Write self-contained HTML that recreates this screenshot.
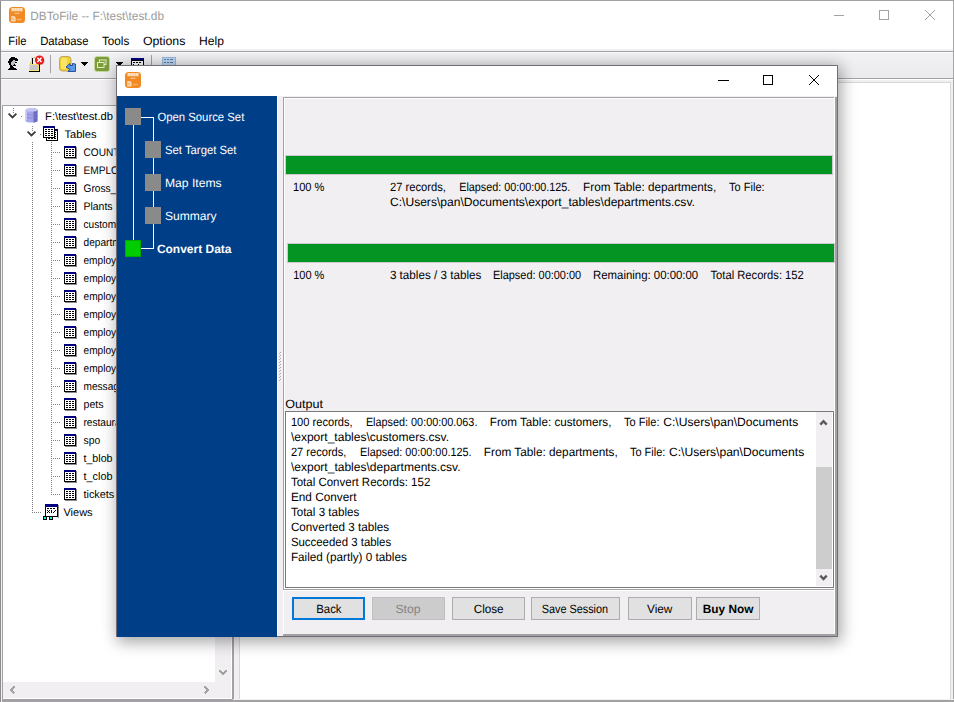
<!DOCTYPE html>
<html><head><meta charset="utf-8"><title>DBToFile</title>
<style>html,body{margin:0;padding:0;background:#fff;overflow:hidden;}svg{display:block;}
text{text-rendering:geometricPrecision;}</style></head>
<body><svg width="954" height="702" viewBox="0 0 954 702" shape-rendering="crispEdges">
<rect x="0" y="0" width="954" height="702" fill="#ffffff" />
<rect x="0" y="51" width="954" height="651" fill="#f1eff2" />
<g transform="translate(9,7)" shape-rendering="geometricPrecision"><rect x="0" y="0" width="16" height="16" rx="3.5" fill="#f28a24"/><rect x="2.5" y="1" width="11" height="3.2" fill="#fde3c4"/><path d="M5.3 1v3.2M8 1v3.2M10.7 1v3.2" stroke="#f6b574" stroke-width="0.6"/><rect x="5.5" y="5.8" width="5" height="1.2" fill="#f8bf86"/><path d="M2.2 9 h3 l1.5 1.5 v4 h-4.5 z" fill="#fad3a8"/><path d="M3 11 l2 2" stroke="#f2a060" stroke-width="0.8"/><rect x="8" y="11.8" width="4.5" height="1.4" fill="#f7b477"/></g>
<text x="30.30" y="20" font-family="&quot;Liberation Sans&quot;, sans-serif" font-size="12" font-weight="400" fill="#9b9b9b" textLength="133.70" lengthAdjust="spacingAndGlyphs" >DBToFile -- F:\test\test.db</text>
<rect x="834" y="15" width="10" height="1" fill="#a3a3a3" />
<rect x="879.5" y="10.5" width="9" height="9" fill="none" stroke="#a3a3a3" stroke-width="1"/>
<path d="M925 10 L935 20 M935 10 L925 20" stroke="#a3a3a3" stroke-width="1"/>
<text x="8.30" y="45" font-family="&quot;Liberation Sans&quot;, sans-serif" font-size="12" font-weight="400" fill="#000" textLength="18.10" lengthAdjust="spacingAndGlyphs" >File</text>
<text x="40.20" y="45" font-family="&quot;Liberation Sans&quot;, sans-serif" font-size="12" font-weight="400" fill="#000" textLength="48.30" lengthAdjust="spacingAndGlyphs" >Database</text>
<text x="101.90" y="45" font-family="&quot;Liberation Sans&quot;, sans-serif" font-size="12" font-weight="400" fill="#000" textLength="27.40" lengthAdjust="spacingAndGlyphs" >Tools</text>
<text x="142.90" y="45" font-family="&quot;Liberation Sans&quot;, sans-serif" font-size="12" font-weight="400" fill="#000" textLength="42.50" lengthAdjust="spacingAndGlyphs" >Options</text>
<text x="199.00" y="45" font-family="&quot;Liberation Sans&quot;, sans-serif" font-size="12" font-weight="400" fill="#000" textLength="24.90" lengthAdjust="spacingAndGlyphs" >Help</text>
<rect x="0" y="49" width="954" height="2" fill="#f1f0f3" />
<rect x="0" y="51" width="954" height="1" fill="#a3a1a6" />
<rect x="0" y="52" width="954" height="1" fill="#fcfcfc" />
<defs><linearGradient id="tbg" x1="0" y1="0" x2="0" y2="1"><stop offset="0" stop-color="#f2f1f4"/><stop offset="1" stop-color="#ebeaed"/></linearGradient></defs>
<rect x="0" y="53" width="954" height="25" fill="url(#tbg)" />
<rect x="0" y="78" width="954" height="1" fill="#a3a1a6" />
<rect x="0" y="79" width="954" height="1" fill="#ffffff" />
<rect x="11" y="57" width="1" height="1" fill="#000"/><rect x="12" y="57" width="1" height="1" fill="#000"/><rect x="13" y="57" width="1" height="1" fill="#000"/><rect x="14" y="57" width="1" height="1" fill="#000"/><rect x="10" y="58" width="1" height="1" fill="#000"/><rect x="11" y="58" width="1" height="1" fill="#000"/><rect x="12" y="58" width="1" height="1" fill="#000"/><rect x="13" y="58" width="1" height="1" fill="#000"/><rect x="14" y="58" width="1" height="1" fill="#000"/><rect x="15" y="58" width="1" height="1" fill="#000"/><rect x="16" y="58" width="1" height="1" fill="#000"/><rect x="9" y="59" width="1" height="1" fill="#000"/><rect x="10" y="59" width="1" height="1" fill="#000"/><rect x="11" y="59" width="1" height="1" fill="#000"/><rect x="12" y="59" width="1" height="1" fill="#000"/><rect x="13" y="59" width="1" height="1" fill="#000"/><rect x="14" y="59" width="1" height="1" fill="#000"/><rect x="15" y="59" width="1" height="1" fill="#000"/><rect x="16" y="59" width="1" height="1" fill="#000"/><rect x="17" y="59" width="1" height="1" fill="#000"/><rect x="9" y="60" width="1" height="1" fill="#000"/><rect x="10" y="60" width="1" height="1" fill="#000"/><rect x="11" y="60" width="1" height="1" fill="#000"/><rect x="12" y="60" width="1" height="1" fill="#000"/><rect x="13" y="60" width="1" height="1" fill="#c0c0c0"/><rect x="14" y="60" width="1" height="1" fill="#c0c0c0"/><rect x="15" y="60" width="1" height="1" fill="#000"/><rect x="16" y="60" width="1" height="1" fill="#000"/><rect x="17" y="60" width="1" height="1" fill="#000"/><rect x="8" y="61" width="1" height="1" fill="#000"/><rect x="9" y="61" width="1" height="1" fill="#000"/><rect x="10" y="61" width="1" height="1" fill="#000"/><rect x="11" y="61" width="1" height="1" fill="#000"/><rect x="12" y="61" width="1" height="1" fill="#c0c0c0"/><rect x="13" y="61" width="1" height="1" fill="#c0c0c0"/><rect x="14" y="61" width="1" height="1" fill="#c0c0c0"/><rect x="15" y="61" width="1" height="1" fill="#c0c0c0"/><rect x="8" y="62" width="1" height="1" fill="#000"/><rect x="9" y="62" width="1" height="1" fill="#000"/><rect x="10" y="62" width="1" height="1" fill="#000"/><rect x="11" y="62" width="1" height="1" fill="#c0c0c0"/><rect x="12" y="62" width="1" height="1" fill="#c0c0c0"/><rect x="13" y="62" width="1" height="1" fill="#c0c0c0"/><rect x="14" y="62" width="1" height="1" fill="#c0c0c0"/><rect x="15" y="62" width="1" height="1" fill="#000"/><rect x="16" y="62" width="1" height="1" fill="#000"/><rect x="9" y="63" width="1" height="1" fill="#000"/><rect x="10" y="63" width="1" height="1" fill="#000"/><rect x="11" y="63" width="1" height="1" fill="#c0c0c0"/><rect x="12" y="63" width="1" height="1" fill="#c0c0c0"/><rect x="13" y="63" width="1" height="1" fill="#c0c0c0"/><rect x="14" y="63" width="1" height="1" fill="#c0c0c0"/><rect x="9" y="64" width="1" height="1" fill="#000"/><rect x="10" y="64" width="1" height="1" fill="#000"/><rect x="11" y="64" width="1" height="1" fill="#c0c0c0"/><rect x="12" y="64" width="1" height="1" fill="#c0c0c0"/><rect x="13" y="64" width="1" height="1" fill="#c0c0c0"/><rect x="14" y="64" width="1" height="1" fill="#000"/><rect x="10" y="65" width="1" height="1" fill="#000"/><rect x="11" y="65" width="1" height="1" fill="#000"/><rect x="12" y="65" width="1" height="1" fill="#c0c0c0"/><rect x="13" y="65" width="1" height="1" fill="#000"/><rect x="14" y="65" width="1" height="1" fill="#000"/><rect x="15" y="65" width="1" height="1" fill="#000"/><rect x="10" y="66" width="1" height="1" fill="#000"/><rect x="11" y="66" width="1" height="1" fill="#000"/><rect x="12" y="66" width="1" height="1" fill="#000"/><rect x="10" y="67" width="1" height="1" fill="#000"/><rect x="11" y="67" width="1" height="1" fill="#000"/><rect x="12" y="67" width="1" height="1" fill="#000"/><rect x="13" y="67" width="1" height="1" fill="#000"/><rect x="9" y="68" width="1" height="1" fill="#000"/><rect x="10" y="68" width="1" height="1" fill="#000"/><rect x="11" y="68" width="1" height="1" fill="#000"/><rect x="12" y="68" width="1" height="1" fill="#000"/><rect x="13" y="68" width="1" height="1" fill="#000"/><rect x="14" y="68" width="1" height="1" fill="#000"/><rect x="15" y="68" width="1" height="1" fill="#000"/><rect x="8" y="69" width="1" height="1" fill="#000"/><rect x="9" y="69" width="1" height="1" fill="#000"/><rect x="10" y="69" width="1" height="1" fill="#000"/><rect x="11" y="69" width="1" height="1" fill="#000"/><rect x="12" y="69" width="1" height="1" fill="#000"/><rect x="13" y="69" width="1" height="1" fill="#000"/><rect x="14" y="69" width="1" height="1" fill="#000"/><rect x="15" y="69" width="1" height="1" fill="#000"/><rect x="16" y="69" width="1" height="1" fill="#000"/>
<g><rect x="29" y="64" width="11" height="8" fill="#000"/><rect x="29" y="64" width="10" height="7" fill="#f3e46c"/><rect x="30" y="65" width="8" height="5" fill="#c6c6cc"/><rect x="31" y="57" width="1" height="7" fill="#f3e46c"/><rect x="32" y="58" width="1" height="6" fill="#000"/><rect x="30" y="62" width="1" height="2" fill="#d8d070"/><rect x="33" y="57" width="2" height="1" fill="#c8d060"/></g>
<g shape-rendering="geometricPrecision"><circle cx="39.5" cy="60" r="4.6" fill="#e8161b"/><circle cx="40.5" cy="61" r="4" fill="#b01010" opacity="0.35"/><circle cx="39.3" cy="59.8" r="3.8" fill="#ee2222"/><path d="M37.3 57.8 L41.5 62 M41.5 57.8 L37.3 62" stroke="#fff" stroke-width="1.4"/></g>
<rect x="50" y="55" width="1" height="18" fill="#a3a1a6" />
<g shape-rendering="geometricPrecision"><rect x="59.5" y="56.5" width="11.5" height="14.5" rx="3" fill="#f3d22e" stroke="#b9a46a" stroke-width="1"/><rect x="61" y="58" width="6" height="11" rx="2" fill="#fae979" opacity="0.8"/><path d="M66 67 L70 63.5 L70 65.5 L72.5 65.5 L72.5 63.5 L75.5 64 L75.5 71.5 L68 71.5 L70 69.5 Z" fill="#5b9be8" stroke="#1d3f9a" stroke-width="0.9"/></g>
<path d="M81 62 H88 L84.5 66 Z" fill="#000"/>
<g shape-rendering="geometricPrecision"><rect x="94.5" y="56.5" width="15" height="15" rx="2.5" fill="#7c9c3a" stroke="#c9dca0" stroke-width="0.8"/><rect x="99.5" y="60" width="6.5" height="4.5" fill="none" stroke="#e0ecc4" stroke-width="1"/><rect x="97.5" y="62.5" width="6.5" height="5" fill="#7c9c3a" stroke="#e0ecc4" stroke-width="1"/></g>
<path d="M116 62 H123 L119.5 66 Z" fill="#000"/>
<g transform="translate(131,58)"><rect x="0" y="0" width="13" height="10" fill="#000"/><rect x="0" y="0" width="13" height="2" fill="#000080"/><rect x="1" y="3" width="11" height="7" fill="#fff"/><rect x="2" y="4" width="2" height="1" fill="#000"/><rect x="5" y="4" width="2" height="1" fill="#000"/><rect x="8" y="4" width="2" height="1" fill="#000"/><path d="M2 6 L5 9 M7 6 L10 9" stroke="#000" stroke-width="1"/></g>
<rect x="151" y="55" width="1" height="18" fill="#a3a1a6" />
<g transform="translate(162,57)"><rect x="0" y="0" width="13" height="10" fill="#bcd8f4" stroke="#9bb8d8" stroke-width="1"/><rect x="2" y="2" width="2" height="1" fill="#5b7fa8"/><rect x="5" y="2" width="2" height="1" fill="#5b7fa8"/><rect x="8" y="2" width="3" height="1" fill="#5b7fa8"/><rect x="2" y="5" width="2" height="1" fill="#5b7fa8"/><rect x="5" y="5" width="2" height="1" fill="#5b7fa8"/><rect x="8" y="5" width="3" height="1" fill="#5b7fa8"/></g>
<rect x="0" y="0" width="1" height="702" fill="#8c8c8c" />
<rect x="0" y="0" width="954" height="1" fill="#a3a1a6" />
<rect x="953" y="0" width="1" height="702" fill="#a8a8a8" />
<rect x="2" y="105" width="232" height="597" fill="#a3a1a6" />
<rect x="3" y="106" width="229" height="593" fill="#ffffff" />
<rect x="215" y="106" width="16" height="592" fill="#f1eff2" />
<rect x="3" y="682" width="228" height="16" fill="#f1eff2" />
<path d="M219.5 670.5 L223 674 L226.5 670.5" fill="none" stroke="#a3a3a3" stroke-width="2"/>
<path d="M204.5 686.5 L208 690 L204.5 693.5" fill="none" stroke="#a3a3a3" stroke-width="2"/>
<path d="M14.5 686.5 L11 690 L14.5 693.5" fill="none" stroke="#a3a3a3" stroke-width="2"/>
<path d="M8.6 113.6 L12.5 117.5 L16.4 113.6" fill="none" stroke="#3c3c3c" stroke-width="1.8" shape-rendering="geometricPrecision"/>
<rect x="13" y="108" width="1" height="1" fill="#808080" />
<rect x="13" y="110" width="1" height="1" fill="#808080" />
<rect x="13" y="112" width="1" height="1" fill="#808080" />
<rect x="21" y="116" width="1" height="1" fill="#808080" />
<g transform="translate(25,108)" shape-rendering="geometricPrecision"><path d="M0.5 2.2 Q0.5 0.2 6.5 0.2 Q12.5 0.2 12.5 2.2 V12.5 Q12.5 14.6 6.5 14.6 Q0.5 14.6 0.5 12.5 Z" fill="#a4a4ea"/><path d="M8.5 0.6 Q12.5 1 12.5 2.2 V12.5 Q12.5 14 8.5 14.5 Z" fill="#6a6abf"/><path d="M0.5 2.2 Q0.5 0.2 6.5 0.2 Q12.5 0.2 12.5 2.2 Q12.5 3.6 6.5 3.6 Q0.5 3.6 0.5 2.2 Z" fill="#c4c4f4"/><path d="M1.5 6.5 Q6 7.5 11.5 6.5 M1.5 9.5 Q6 10.5 11.5 9.5" fill="none" stroke="#8282d4" stroke-width="0.7"/><path d="M1.5 3 V12" stroke="#d0d0f8" stroke-width="0.8"/></g>
<text x="45.10" y="120" font-family="&quot;Liberation Sans&quot;, sans-serif" font-size="11" font-weight="400" fill="#000" textLength="67.90" lengthAdjust="spacingAndGlyphs" >F:\test\test.db</text>
<path d="M27.6 131.6 L31.5 135.5 L35.4 131.6" fill="none" stroke="#3c3c3c" stroke-width="1.8" shape-rendering="geometricPrecision"/>
<rect x="32" y="126" width="1" height="1" fill="#808080" />
<rect x="32" y="128" width="1" height="1" fill="#808080" />
<rect x="32" y="130" width="1" height="1" fill="#808080" />
<rect x="40" y="134" width="1" height="1" fill="#808080" />
<rect x="46" y="129" width="12" height="12" fill="#000" />
<rect x="46" y="129" width="12" height="2" fill="#000080" />
<rect x="47" y="131" width="10" height="9" fill="#fff" />
<rect x="48" y="132" width="2" height="1" fill="#000" />
<rect x="51" y="132" width="2" height="1" fill="#000" />
<rect x="54" y="132" width="2" height="1" fill="#000" />
<rect x="48" y="134" width="2" height="1" fill="#000" />
<rect x="51" y="134" width="2" height="1" fill="#000" />
<rect x="54" y="134" width="2" height="1" fill="#000" />
<rect x="48" y="136" width="2" height="1" fill="#000" />
<rect x="51" y="136" width="2" height="1" fill="#000" />
<rect x="54" y="136" width="2" height="1" fill="#000" />
<rect x="48" y="138" width="2" height="1" fill="#000" />
<rect x="51" y="138" width="2" height="1" fill="#000" />
<rect x="54" y="138" width="2" height="1" fill="#000" />
<rect x="43" y="126" width="12" height="12" fill="#000" />
<rect x="43" y="126" width="12" height="2" fill="#000080" />
<rect x="44" y="128" width="10" height="9" fill="#fff" />
<rect x="45" y="129" width="2" height="1" fill="#000" />
<rect x="48" y="129" width="2" height="1" fill="#000" />
<rect x="51" y="129" width="2" height="1" fill="#000" />
<rect x="45" y="131" width="2" height="1" fill="#000" />
<rect x="48" y="131" width="2" height="1" fill="#000" />
<rect x="51" y="131" width="2" height="1" fill="#000" />
<rect x="45" y="133" width="2" height="1" fill="#000" />
<rect x="48" y="133" width="2" height="1" fill="#000" />
<rect x="51" y="133" width="2" height="1" fill="#000" />
<rect x="45" y="135" width="2" height="1" fill="#000" />
<rect x="48" y="135" width="2" height="1" fill="#000" />
<rect x="51" y="135" width="2" height="1" fill="#000" />
<text x="64.50" y="138" font-family="&quot;Liberation Sans&quot;, sans-serif" font-size="11" font-weight="400" fill="#000" textLength="32.00" lengthAdjust="spacingAndGlyphs" >Tables</text>
<rect x="32" y="142" width="1" height="1" fill="#808080" />
<rect x="32" y="144" width="1" height="1" fill="#808080" />
<rect x="32" y="146" width="1" height="1" fill="#808080" />
<rect x="32" y="148" width="1" height="1" fill="#808080" />
<rect x="32" y="150" width="1" height="1" fill="#808080" />
<rect x="32" y="152" width="1" height="1" fill="#808080" />
<rect x="32" y="154" width="1" height="1" fill="#808080" />
<rect x="32" y="156" width="1" height="1" fill="#808080" />
<rect x="32" y="158" width="1" height="1" fill="#808080" />
<rect x="32" y="160" width="1" height="1" fill="#808080" />
<rect x="32" y="162" width="1" height="1" fill="#808080" />
<rect x="32" y="164" width="1" height="1" fill="#808080" />
<rect x="32" y="166" width="1" height="1" fill="#808080" />
<rect x="32" y="168" width="1" height="1" fill="#808080" />
<rect x="32" y="170" width="1" height="1" fill="#808080" />
<rect x="32" y="172" width="1" height="1" fill="#808080" />
<rect x="32" y="174" width="1" height="1" fill="#808080" />
<rect x="32" y="176" width="1" height="1" fill="#808080" />
<rect x="32" y="178" width="1" height="1" fill="#808080" />
<rect x="32" y="180" width="1" height="1" fill="#808080" />
<rect x="32" y="182" width="1" height="1" fill="#808080" />
<rect x="32" y="184" width="1" height="1" fill="#808080" />
<rect x="32" y="186" width="1" height="1" fill="#808080" />
<rect x="32" y="188" width="1" height="1" fill="#808080" />
<rect x="32" y="190" width="1" height="1" fill="#808080" />
<rect x="32" y="192" width="1" height="1" fill="#808080" />
<rect x="32" y="194" width="1" height="1" fill="#808080" />
<rect x="32" y="196" width="1" height="1" fill="#808080" />
<rect x="32" y="198" width="1" height="1" fill="#808080" />
<rect x="32" y="200" width="1" height="1" fill="#808080" />
<rect x="32" y="202" width="1" height="1" fill="#808080" />
<rect x="32" y="204" width="1" height="1" fill="#808080" />
<rect x="32" y="206" width="1" height="1" fill="#808080" />
<rect x="32" y="208" width="1" height="1" fill="#808080" />
<rect x="32" y="210" width="1" height="1" fill="#808080" />
<rect x="32" y="212" width="1" height="1" fill="#808080" />
<rect x="32" y="214" width="1" height="1" fill="#808080" />
<rect x="32" y="216" width="1" height="1" fill="#808080" />
<rect x="32" y="218" width="1" height="1" fill="#808080" />
<rect x="32" y="220" width="1" height="1" fill="#808080" />
<rect x="32" y="222" width="1" height="1" fill="#808080" />
<rect x="32" y="224" width="1" height="1" fill="#808080" />
<rect x="32" y="226" width="1" height="1" fill="#808080" />
<rect x="32" y="228" width="1" height="1" fill="#808080" />
<rect x="32" y="230" width="1" height="1" fill="#808080" />
<rect x="32" y="232" width="1" height="1" fill="#808080" />
<rect x="32" y="234" width="1" height="1" fill="#808080" />
<rect x="32" y="236" width="1" height="1" fill="#808080" />
<rect x="32" y="238" width="1" height="1" fill="#808080" />
<rect x="32" y="240" width="1" height="1" fill="#808080" />
<rect x="32" y="242" width="1" height="1" fill="#808080" />
<rect x="32" y="244" width="1" height="1" fill="#808080" />
<rect x="32" y="246" width="1" height="1" fill="#808080" />
<rect x="32" y="248" width="1" height="1" fill="#808080" />
<rect x="32" y="250" width="1" height="1" fill="#808080" />
<rect x="32" y="252" width="1" height="1" fill="#808080" />
<rect x="32" y="254" width="1" height="1" fill="#808080" />
<rect x="32" y="256" width="1" height="1" fill="#808080" />
<rect x="32" y="258" width="1" height="1" fill="#808080" />
<rect x="32" y="260" width="1" height="1" fill="#808080" />
<rect x="32" y="262" width="1" height="1" fill="#808080" />
<rect x="32" y="264" width="1" height="1" fill="#808080" />
<rect x="32" y="266" width="1" height="1" fill="#808080" />
<rect x="32" y="268" width="1" height="1" fill="#808080" />
<rect x="32" y="270" width="1" height="1" fill="#808080" />
<rect x="32" y="272" width="1" height="1" fill="#808080" />
<rect x="32" y="274" width="1" height="1" fill="#808080" />
<rect x="32" y="276" width="1" height="1" fill="#808080" />
<rect x="32" y="278" width="1" height="1" fill="#808080" />
<rect x="32" y="280" width="1" height="1" fill="#808080" />
<rect x="32" y="282" width="1" height="1" fill="#808080" />
<rect x="32" y="284" width="1" height="1" fill="#808080" />
<rect x="32" y="286" width="1" height="1" fill="#808080" />
<rect x="32" y="288" width="1" height="1" fill="#808080" />
<rect x="32" y="290" width="1" height="1" fill="#808080" />
<rect x="32" y="292" width="1" height="1" fill="#808080" />
<rect x="32" y="294" width="1" height="1" fill="#808080" />
<rect x="32" y="296" width="1" height="1" fill="#808080" />
<rect x="32" y="298" width="1" height="1" fill="#808080" />
<rect x="32" y="300" width="1" height="1" fill="#808080" />
<rect x="32" y="302" width="1" height="1" fill="#808080" />
<rect x="32" y="304" width="1" height="1" fill="#808080" />
<rect x="32" y="306" width="1" height="1" fill="#808080" />
<rect x="32" y="308" width="1" height="1" fill="#808080" />
<rect x="32" y="310" width="1" height="1" fill="#808080" />
<rect x="32" y="312" width="1" height="1" fill="#808080" />
<rect x="32" y="314" width="1" height="1" fill="#808080" />
<rect x="32" y="316" width="1" height="1" fill="#808080" />
<rect x="32" y="318" width="1" height="1" fill="#808080" />
<rect x="32" y="320" width="1" height="1" fill="#808080" />
<rect x="32" y="322" width="1" height="1" fill="#808080" />
<rect x="32" y="324" width="1" height="1" fill="#808080" />
<rect x="32" y="326" width="1" height="1" fill="#808080" />
<rect x="32" y="328" width="1" height="1" fill="#808080" />
<rect x="32" y="330" width="1" height="1" fill="#808080" />
<rect x="32" y="332" width="1" height="1" fill="#808080" />
<rect x="32" y="334" width="1" height="1" fill="#808080" />
<rect x="32" y="336" width="1" height="1" fill="#808080" />
<rect x="32" y="338" width="1" height="1" fill="#808080" />
<rect x="32" y="340" width="1" height="1" fill="#808080" />
<rect x="32" y="342" width="1" height="1" fill="#808080" />
<rect x="32" y="344" width="1" height="1" fill="#808080" />
<rect x="32" y="346" width="1" height="1" fill="#808080" />
<rect x="32" y="348" width="1" height="1" fill="#808080" />
<rect x="32" y="350" width="1" height="1" fill="#808080" />
<rect x="32" y="352" width="1" height="1" fill="#808080" />
<rect x="32" y="354" width="1" height="1" fill="#808080" />
<rect x="32" y="356" width="1" height="1" fill="#808080" />
<rect x="32" y="358" width="1" height="1" fill="#808080" />
<rect x="32" y="360" width="1" height="1" fill="#808080" />
<rect x="32" y="362" width="1" height="1" fill="#808080" />
<rect x="32" y="364" width="1" height="1" fill="#808080" />
<rect x="32" y="366" width="1" height="1" fill="#808080" />
<rect x="32" y="368" width="1" height="1" fill="#808080" />
<rect x="32" y="370" width="1" height="1" fill="#808080" />
<rect x="32" y="372" width="1" height="1" fill="#808080" />
<rect x="32" y="374" width="1" height="1" fill="#808080" />
<rect x="32" y="376" width="1" height="1" fill="#808080" />
<rect x="32" y="378" width="1" height="1" fill="#808080" />
<rect x="32" y="380" width="1" height="1" fill="#808080" />
<rect x="32" y="382" width="1" height="1" fill="#808080" />
<rect x="32" y="384" width="1" height="1" fill="#808080" />
<rect x="32" y="386" width="1" height="1" fill="#808080" />
<rect x="32" y="388" width="1" height="1" fill="#808080" />
<rect x="32" y="390" width="1" height="1" fill="#808080" />
<rect x="32" y="392" width="1" height="1" fill="#808080" />
<rect x="32" y="394" width="1" height="1" fill="#808080" />
<rect x="32" y="396" width="1" height="1" fill="#808080" />
<rect x="32" y="398" width="1" height="1" fill="#808080" />
<rect x="32" y="400" width="1" height="1" fill="#808080" />
<rect x="32" y="402" width="1" height="1" fill="#808080" />
<rect x="32" y="404" width="1" height="1" fill="#808080" />
<rect x="32" y="406" width="1" height="1" fill="#808080" />
<rect x="32" y="408" width="1" height="1" fill="#808080" />
<rect x="32" y="410" width="1" height="1" fill="#808080" />
<rect x="32" y="412" width="1" height="1" fill="#808080" />
<rect x="32" y="414" width="1" height="1" fill="#808080" />
<rect x="32" y="416" width="1" height="1" fill="#808080" />
<rect x="32" y="418" width="1" height="1" fill="#808080" />
<rect x="32" y="420" width="1" height="1" fill="#808080" />
<rect x="32" y="422" width="1" height="1" fill="#808080" />
<rect x="32" y="424" width="1" height="1" fill="#808080" />
<rect x="32" y="426" width="1" height="1" fill="#808080" />
<rect x="32" y="428" width="1" height="1" fill="#808080" />
<rect x="32" y="430" width="1" height="1" fill="#808080" />
<rect x="32" y="432" width="1" height="1" fill="#808080" />
<rect x="32" y="434" width="1" height="1" fill="#808080" />
<rect x="32" y="436" width="1" height="1" fill="#808080" />
<rect x="32" y="438" width="1" height="1" fill="#808080" />
<rect x="32" y="440" width="1" height="1" fill="#808080" />
<rect x="32" y="442" width="1" height="1" fill="#808080" />
<rect x="32" y="444" width="1" height="1" fill="#808080" />
<rect x="32" y="446" width="1" height="1" fill="#808080" />
<rect x="32" y="448" width="1" height="1" fill="#808080" />
<rect x="32" y="450" width="1" height="1" fill="#808080" />
<rect x="32" y="452" width="1" height="1" fill="#808080" />
<rect x="32" y="454" width="1" height="1" fill="#808080" />
<rect x="32" y="456" width="1" height="1" fill="#808080" />
<rect x="32" y="458" width="1" height="1" fill="#808080" />
<rect x="32" y="460" width="1" height="1" fill="#808080" />
<rect x="32" y="462" width="1" height="1" fill="#808080" />
<rect x="32" y="464" width="1" height="1" fill="#808080" />
<rect x="32" y="466" width="1" height="1" fill="#808080" />
<rect x="32" y="468" width="1" height="1" fill="#808080" />
<rect x="32" y="470" width="1" height="1" fill="#808080" />
<rect x="32" y="472" width="1" height="1" fill="#808080" />
<rect x="32" y="474" width="1" height="1" fill="#808080" />
<rect x="32" y="476" width="1" height="1" fill="#808080" />
<rect x="32" y="478" width="1" height="1" fill="#808080" />
<rect x="32" y="480" width="1" height="1" fill="#808080" />
<rect x="32" y="482" width="1" height="1" fill="#808080" />
<rect x="32" y="484" width="1" height="1" fill="#808080" />
<rect x="32" y="486" width="1" height="1" fill="#808080" />
<rect x="32" y="488" width="1" height="1" fill="#808080" />
<rect x="32" y="490" width="1" height="1" fill="#808080" />
<rect x="32" y="492" width="1" height="1" fill="#808080" />
<rect x="32" y="494" width="1" height="1" fill="#808080" />
<rect x="32" y="496" width="1" height="1" fill="#808080" />
<rect x="32" y="498" width="1" height="1" fill="#808080" />
<rect x="32" y="500" width="1" height="1" fill="#808080" />
<rect x="32" y="502" width="1" height="1" fill="#808080" />
<rect x="32" y="504" width="1" height="1" fill="#808080" />
<rect x="32" y="506" width="1" height="1" fill="#808080" />
<rect x="32" y="508" width="1" height="1" fill="#808080" />
<rect x="32" y="510" width="1" height="1" fill="#808080" />
<rect x="32" y="512" width="1" height="1" fill="#808080" />
<rect x="51" y="142" width="1" height="1" fill="#808080" />
<rect x="51" y="144" width="1" height="1" fill="#808080" />
<rect x="51" y="146" width="1" height="1" fill="#808080" />
<rect x="51" y="148" width="1" height="1" fill="#808080" />
<rect x="51" y="150" width="1" height="1" fill="#808080" />
<rect x="51" y="152" width="1" height="1" fill="#808080" />
<rect x="51" y="154" width="1" height="1" fill="#808080" />
<rect x="51" y="156" width="1" height="1" fill="#808080" />
<rect x="51" y="158" width="1" height="1" fill="#808080" />
<rect x="51" y="160" width="1" height="1" fill="#808080" />
<rect x="51" y="162" width="1" height="1" fill="#808080" />
<rect x="51" y="164" width="1" height="1" fill="#808080" />
<rect x="51" y="166" width="1" height="1" fill="#808080" />
<rect x="51" y="168" width="1" height="1" fill="#808080" />
<rect x="51" y="170" width="1" height="1" fill="#808080" />
<rect x="51" y="172" width="1" height="1" fill="#808080" />
<rect x="51" y="174" width="1" height="1" fill="#808080" />
<rect x="51" y="176" width="1" height="1" fill="#808080" />
<rect x="51" y="178" width="1" height="1" fill="#808080" />
<rect x="51" y="180" width="1" height="1" fill="#808080" />
<rect x="51" y="182" width="1" height="1" fill="#808080" />
<rect x="51" y="184" width="1" height="1" fill="#808080" />
<rect x="51" y="186" width="1" height="1" fill="#808080" />
<rect x="51" y="188" width="1" height="1" fill="#808080" />
<rect x="51" y="190" width="1" height="1" fill="#808080" />
<rect x="51" y="192" width="1" height="1" fill="#808080" />
<rect x="51" y="194" width="1" height="1" fill="#808080" />
<rect x="51" y="196" width="1" height="1" fill="#808080" />
<rect x="51" y="198" width="1" height="1" fill="#808080" />
<rect x="51" y="200" width="1" height="1" fill="#808080" />
<rect x="51" y="202" width="1" height="1" fill="#808080" />
<rect x="51" y="204" width="1" height="1" fill="#808080" />
<rect x="51" y="206" width="1" height="1" fill="#808080" />
<rect x="51" y="208" width="1" height="1" fill="#808080" />
<rect x="51" y="210" width="1" height="1" fill="#808080" />
<rect x="51" y="212" width="1" height="1" fill="#808080" />
<rect x="51" y="214" width="1" height="1" fill="#808080" />
<rect x="51" y="216" width="1" height="1" fill="#808080" />
<rect x="51" y="218" width="1" height="1" fill="#808080" />
<rect x="51" y="220" width="1" height="1" fill="#808080" />
<rect x="51" y="222" width="1" height="1" fill="#808080" />
<rect x="51" y="224" width="1" height="1" fill="#808080" />
<rect x="51" y="226" width="1" height="1" fill="#808080" />
<rect x="51" y="228" width="1" height="1" fill="#808080" />
<rect x="51" y="230" width="1" height="1" fill="#808080" />
<rect x="51" y="232" width="1" height="1" fill="#808080" />
<rect x="51" y="234" width="1" height="1" fill="#808080" />
<rect x="51" y="236" width="1" height="1" fill="#808080" />
<rect x="51" y="238" width="1" height="1" fill="#808080" />
<rect x="51" y="240" width="1" height="1" fill="#808080" />
<rect x="51" y="242" width="1" height="1" fill="#808080" />
<rect x="51" y="244" width="1" height="1" fill="#808080" />
<rect x="51" y="246" width="1" height="1" fill="#808080" />
<rect x="51" y="248" width="1" height="1" fill="#808080" />
<rect x="51" y="250" width="1" height="1" fill="#808080" />
<rect x="51" y="252" width="1" height="1" fill="#808080" />
<rect x="51" y="254" width="1" height="1" fill="#808080" />
<rect x="51" y="256" width="1" height="1" fill="#808080" />
<rect x="51" y="258" width="1" height="1" fill="#808080" />
<rect x="51" y="260" width="1" height="1" fill="#808080" />
<rect x="51" y="262" width="1" height="1" fill="#808080" />
<rect x="51" y="264" width="1" height="1" fill="#808080" />
<rect x="51" y="266" width="1" height="1" fill="#808080" />
<rect x="51" y="268" width="1" height="1" fill="#808080" />
<rect x="51" y="270" width="1" height="1" fill="#808080" />
<rect x="51" y="272" width="1" height="1" fill="#808080" />
<rect x="51" y="274" width="1" height="1" fill="#808080" />
<rect x="51" y="276" width="1" height="1" fill="#808080" />
<rect x="51" y="278" width="1" height="1" fill="#808080" />
<rect x="51" y="280" width="1" height="1" fill="#808080" />
<rect x="51" y="282" width="1" height="1" fill="#808080" />
<rect x="51" y="284" width="1" height="1" fill="#808080" />
<rect x="51" y="286" width="1" height="1" fill="#808080" />
<rect x="51" y="288" width="1" height="1" fill="#808080" />
<rect x="51" y="290" width="1" height="1" fill="#808080" />
<rect x="51" y="292" width="1" height="1" fill="#808080" />
<rect x="51" y="294" width="1" height="1" fill="#808080" />
<rect x="51" y="296" width="1" height="1" fill="#808080" />
<rect x="51" y="298" width="1" height="1" fill="#808080" />
<rect x="51" y="300" width="1" height="1" fill="#808080" />
<rect x="51" y="302" width="1" height="1" fill="#808080" />
<rect x="51" y="304" width="1" height="1" fill="#808080" />
<rect x="51" y="306" width="1" height="1" fill="#808080" />
<rect x="51" y="308" width="1" height="1" fill="#808080" />
<rect x="51" y="310" width="1" height="1" fill="#808080" />
<rect x="51" y="312" width="1" height="1" fill="#808080" />
<rect x="51" y="314" width="1" height="1" fill="#808080" />
<rect x="51" y="316" width="1" height="1" fill="#808080" />
<rect x="51" y="318" width="1" height="1" fill="#808080" />
<rect x="51" y="320" width="1" height="1" fill="#808080" />
<rect x="51" y="322" width="1" height="1" fill="#808080" />
<rect x="51" y="324" width="1" height="1" fill="#808080" />
<rect x="51" y="326" width="1" height="1" fill="#808080" />
<rect x="51" y="328" width="1" height="1" fill="#808080" />
<rect x="51" y="330" width="1" height="1" fill="#808080" />
<rect x="51" y="332" width="1" height="1" fill="#808080" />
<rect x="51" y="334" width="1" height="1" fill="#808080" />
<rect x="51" y="336" width="1" height="1" fill="#808080" />
<rect x="51" y="338" width="1" height="1" fill="#808080" />
<rect x="51" y="340" width="1" height="1" fill="#808080" />
<rect x="51" y="342" width="1" height="1" fill="#808080" />
<rect x="51" y="344" width="1" height="1" fill="#808080" />
<rect x="51" y="346" width="1" height="1" fill="#808080" />
<rect x="51" y="348" width="1" height="1" fill="#808080" />
<rect x="51" y="350" width="1" height="1" fill="#808080" />
<rect x="51" y="352" width="1" height="1" fill="#808080" />
<rect x="51" y="354" width="1" height="1" fill="#808080" />
<rect x="51" y="356" width="1" height="1" fill="#808080" />
<rect x="51" y="358" width="1" height="1" fill="#808080" />
<rect x="51" y="360" width="1" height="1" fill="#808080" />
<rect x="51" y="362" width="1" height="1" fill="#808080" />
<rect x="51" y="364" width="1" height="1" fill="#808080" />
<rect x="51" y="366" width="1" height="1" fill="#808080" />
<rect x="51" y="368" width="1" height="1" fill="#808080" />
<rect x="51" y="370" width="1" height="1" fill="#808080" />
<rect x="51" y="372" width="1" height="1" fill="#808080" />
<rect x="51" y="374" width="1" height="1" fill="#808080" />
<rect x="51" y="376" width="1" height="1" fill="#808080" />
<rect x="51" y="378" width="1" height="1" fill="#808080" />
<rect x="51" y="380" width="1" height="1" fill="#808080" />
<rect x="51" y="382" width="1" height="1" fill="#808080" />
<rect x="51" y="384" width="1" height="1" fill="#808080" />
<rect x="51" y="386" width="1" height="1" fill="#808080" />
<rect x="51" y="388" width="1" height="1" fill="#808080" />
<rect x="51" y="390" width="1" height="1" fill="#808080" />
<rect x="51" y="392" width="1" height="1" fill="#808080" />
<rect x="51" y="394" width="1" height="1" fill="#808080" />
<rect x="51" y="396" width="1" height="1" fill="#808080" />
<rect x="51" y="398" width="1" height="1" fill="#808080" />
<rect x="51" y="400" width="1" height="1" fill="#808080" />
<rect x="51" y="402" width="1" height="1" fill="#808080" />
<rect x="51" y="404" width="1" height="1" fill="#808080" />
<rect x="51" y="406" width="1" height="1" fill="#808080" />
<rect x="51" y="408" width="1" height="1" fill="#808080" />
<rect x="51" y="410" width="1" height="1" fill="#808080" />
<rect x="51" y="412" width="1" height="1" fill="#808080" />
<rect x="51" y="414" width="1" height="1" fill="#808080" />
<rect x="51" y="416" width="1" height="1" fill="#808080" />
<rect x="51" y="418" width="1" height="1" fill="#808080" />
<rect x="51" y="420" width="1" height="1" fill="#808080" />
<rect x="51" y="422" width="1" height="1" fill="#808080" />
<rect x="51" y="424" width="1" height="1" fill="#808080" />
<rect x="51" y="426" width="1" height="1" fill="#808080" />
<rect x="51" y="428" width="1" height="1" fill="#808080" />
<rect x="51" y="430" width="1" height="1" fill="#808080" />
<rect x="51" y="432" width="1" height="1" fill="#808080" />
<rect x="51" y="434" width="1" height="1" fill="#808080" />
<rect x="51" y="436" width="1" height="1" fill="#808080" />
<rect x="51" y="438" width="1" height="1" fill="#808080" />
<rect x="51" y="440" width="1" height="1" fill="#808080" />
<rect x="51" y="442" width="1" height="1" fill="#808080" />
<rect x="51" y="444" width="1" height="1" fill="#808080" />
<rect x="51" y="446" width="1" height="1" fill="#808080" />
<rect x="51" y="448" width="1" height="1" fill="#808080" />
<rect x="51" y="450" width="1" height="1" fill="#808080" />
<rect x="51" y="452" width="1" height="1" fill="#808080" />
<rect x="51" y="454" width="1" height="1" fill="#808080" />
<rect x="51" y="456" width="1" height="1" fill="#808080" />
<rect x="51" y="458" width="1" height="1" fill="#808080" />
<rect x="51" y="460" width="1" height="1" fill="#808080" />
<rect x="51" y="462" width="1" height="1" fill="#808080" />
<rect x="51" y="464" width="1" height="1" fill="#808080" />
<rect x="51" y="466" width="1" height="1" fill="#808080" />
<rect x="51" y="468" width="1" height="1" fill="#808080" />
<rect x="51" y="470" width="1" height="1" fill="#808080" />
<rect x="51" y="472" width="1" height="1" fill="#808080" />
<rect x="51" y="474" width="1" height="1" fill="#808080" />
<rect x="51" y="476" width="1" height="1" fill="#808080" />
<rect x="51" y="478" width="1" height="1" fill="#808080" />
<rect x="51" y="480" width="1" height="1" fill="#808080" />
<rect x="51" y="482" width="1" height="1" fill="#808080" />
<rect x="51" y="484" width="1" height="1" fill="#808080" />
<rect x="51" y="486" width="1" height="1" fill="#808080" />
<rect x="51" y="488" width="1" height="1" fill="#808080" />
<rect x="51" y="490" width="1" height="1" fill="#808080" />
<rect x="51" y="492" width="1" height="1" fill="#808080" />
<rect x="51" y="494" width="1" height="1" fill="#808080" />
<rect x="53" y="152" width="1" height="1" fill="#808080" />
<rect x="55" y="152" width="1" height="1" fill="#808080" />
<rect x="57" y="152" width="1" height="1" fill="#808080" />
<rect x="59" y="152" width="1" height="1" fill="#808080" />
<rect x="65" y="158" width="12" height="1" fill="#8c8c8c" />
<rect x="76" y="147" width="1" height="12" fill="#8c8c8c" />
<rect x="64" y="146" width="12" height="12" fill="#000" />
<rect x="64" y="146" width="12" height="2" fill="#000080" />
<rect x="65" y="148" width="10" height="9" fill="#fff" />
<rect x="66" y="149" width="2" height="1" fill="#000" />
<rect x="69" y="149" width="2" height="1" fill="#000" />
<rect x="72" y="149" width="2" height="1" fill="#000" />
<rect x="66" y="151" width="2" height="1" fill="#000" />
<rect x="69" y="151" width="2" height="1" fill="#000" />
<rect x="72" y="151" width="2" height="1" fill="#000" />
<rect x="66" y="153" width="2" height="1" fill="#000" />
<rect x="69" y="153" width="2" height="1" fill="#000" />
<rect x="72" y="153" width="2" height="1" fill="#000" />
<rect x="66" y="155" width="2" height="1" fill="#000" />
<rect x="69" y="155" width="2" height="1" fill="#000" />
<rect x="72" y="155" width="2" height="1" fill="#000" />
<text x="83.5" y="156" font-family="&quot;Liberation Sans&quot;, sans-serif" font-size="11" fill="#000" textLength="59.6" lengthAdjust="spacingAndGlyphs">COUNTRIES</text>
<rect x="53" y="170" width="1" height="1" fill="#808080" />
<rect x="55" y="170" width="1" height="1" fill="#808080" />
<rect x="57" y="170" width="1" height="1" fill="#808080" />
<rect x="59" y="170" width="1" height="1" fill="#808080" />
<rect x="65" y="176" width="12" height="1" fill="#8c8c8c" />
<rect x="76" y="165" width="1" height="12" fill="#8c8c8c" />
<rect x="64" y="164" width="12" height="12" fill="#000" />
<rect x="64" y="164" width="12" height="2" fill="#000080" />
<rect x="65" y="166" width="10" height="9" fill="#fff" />
<rect x="66" y="167" width="2" height="1" fill="#000" />
<rect x="69" y="167" width="2" height="1" fill="#000" />
<rect x="72" y="167" width="2" height="1" fill="#000" />
<rect x="66" y="169" width="2" height="1" fill="#000" />
<rect x="69" y="169" width="2" height="1" fill="#000" />
<rect x="72" y="169" width="2" height="1" fill="#000" />
<rect x="66" y="171" width="2" height="1" fill="#000" />
<rect x="69" y="171" width="2" height="1" fill="#000" />
<rect x="72" y="171" width="2" height="1" fill="#000" />
<rect x="66" y="173" width="2" height="1" fill="#000" />
<rect x="69" y="173" width="2" height="1" fill="#000" />
<rect x="72" y="173" width="2" height="1" fill="#000" />
<text x="83.5" y="174" font-family="&quot;Liberation Sans&quot;, sans-serif" font-size="11" fill="#000" textLength="62.5" lengthAdjust="spacingAndGlyphs">EMPLOYEES</text>
<rect x="53" y="188" width="1" height="1" fill="#808080" />
<rect x="55" y="188" width="1" height="1" fill="#808080" />
<rect x="57" y="188" width="1" height="1" fill="#808080" />
<rect x="59" y="188" width="1" height="1" fill="#808080" />
<rect x="65" y="194" width="12" height="1" fill="#8c8c8c" />
<rect x="76" y="183" width="1" height="12" fill="#8c8c8c" />
<rect x="64" y="182" width="12" height="12" fill="#000" />
<rect x="64" y="182" width="12" height="2" fill="#000080" />
<rect x="65" y="184" width="10" height="9" fill="#fff" />
<rect x="66" y="185" width="2" height="1" fill="#000" />
<rect x="69" y="185" width="2" height="1" fill="#000" />
<rect x="72" y="185" width="2" height="1" fill="#000" />
<rect x="66" y="187" width="2" height="1" fill="#000" />
<rect x="69" y="187" width="2" height="1" fill="#000" />
<rect x="72" y="187" width="2" height="1" fill="#000" />
<rect x="66" y="189" width="2" height="1" fill="#000" />
<rect x="69" y="189" width="2" height="1" fill="#000" />
<rect x="72" y="189" width="2" height="1" fill="#000" />
<rect x="66" y="191" width="2" height="1" fill="#000" />
<rect x="69" y="191" width="2" height="1" fill="#000" />
<rect x="72" y="191" width="2" height="1" fill="#000" />
<text x="83.5" y="192" font-family="&quot;Liberation Sans&quot;, sans-serif" font-size="11" fill="#000" textLength="58.0" lengthAdjust="spacingAndGlyphs">Gross_Sales</text>
<rect x="53" y="206" width="1" height="1" fill="#808080" />
<rect x="55" y="206" width="1" height="1" fill="#808080" />
<rect x="57" y="206" width="1" height="1" fill="#808080" />
<rect x="59" y="206" width="1" height="1" fill="#808080" />
<rect x="65" y="212" width="12" height="1" fill="#8c8c8c" />
<rect x="76" y="201" width="1" height="12" fill="#8c8c8c" />
<rect x="64" y="200" width="12" height="12" fill="#000" />
<rect x="64" y="200" width="12" height="2" fill="#000080" />
<rect x="65" y="202" width="10" height="9" fill="#fff" />
<rect x="66" y="203" width="2" height="1" fill="#000" />
<rect x="69" y="203" width="2" height="1" fill="#000" />
<rect x="72" y="203" width="2" height="1" fill="#000" />
<rect x="66" y="205" width="2" height="1" fill="#000" />
<rect x="69" y="205" width="2" height="1" fill="#000" />
<rect x="72" y="205" width="2" height="1" fill="#000" />
<rect x="66" y="207" width="2" height="1" fill="#000" />
<rect x="69" y="207" width="2" height="1" fill="#000" />
<rect x="72" y="207" width="2" height="1" fill="#000" />
<rect x="66" y="209" width="2" height="1" fill="#000" />
<rect x="69" y="209" width="2" height="1" fill="#000" />
<rect x="72" y="209" width="2" height="1" fill="#000" />
<text x="83.50" y="210" font-family="&quot;Liberation Sans&quot;, sans-serif" font-size="11" font-weight="400" fill="#000" textLength="29.00" lengthAdjust="spacingAndGlyphs" >Plants</text>
<rect x="53" y="224" width="1" height="1" fill="#808080" />
<rect x="55" y="224" width="1" height="1" fill="#808080" />
<rect x="57" y="224" width="1" height="1" fill="#808080" />
<rect x="59" y="224" width="1" height="1" fill="#808080" />
<rect x="65" y="230" width="12" height="1" fill="#8c8c8c" />
<rect x="76" y="219" width="1" height="12" fill="#8c8c8c" />
<rect x="64" y="218" width="12" height="12" fill="#000" />
<rect x="64" y="218" width="12" height="2" fill="#000080" />
<rect x="65" y="220" width="10" height="9" fill="#fff" />
<rect x="66" y="221" width="2" height="1" fill="#000" />
<rect x="69" y="221" width="2" height="1" fill="#000" />
<rect x="72" y="221" width="2" height="1" fill="#000" />
<rect x="66" y="223" width="2" height="1" fill="#000" />
<rect x="69" y="223" width="2" height="1" fill="#000" />
<rect x="72" y="223" width="2" height="1" fill="#000" />
<rect x="66" y="225" width="2" height="1" fill="#000" />
<rect x="69" y="225" width="2" height="1" fill="#000" />
<rect x="72" y="225" width="2" height="1" fill="#000" />
<rect x="66" y="227" width="2" height="1" fill="#000" />
<rect x="69" y="227" width="2" height="1" fill="#000" />
<rect x="72" y="227" width="2" height="1" fill="#000" />
<text x="83.5" y="228" font-family="&quot;Liberation Sans&quot;, sans-serif" font-size="11" fill="#000" textLength="46.7" lengthAdjust="spacingAndGlyphs">customers</text>
<rect x="53" y="242" width="1" height="1" fill="#808080" />
<rect x="55" y="242" width="1" height="1" fill="#808080" />
<rect x="57" y="242" width="1" height="1" fill="#808080" />
<rect x="59" y="242" width="1" height="1" fill="#808080" />
<rect x="65" y="248" width="12" height="1" fill="#8c8c8c" />
<rect x="76" y="237" width="1" height="12" fill="#8c8c8c" />
<rect x="64" y="236" width="12" height="12" fill="#000" />
<rect x="64" y="236" width="12" height="2" fill="#000080" />
<rect x="65" y="238" width="10" height="9" fill="#fff" />
<rect x="66" y="239" width="2" height="1" fill="#000" />
<rect x="69" y="239" width="2" height="1" fill="#000" />
<rect x="72" y="239" width="2" height="1" fill="#000" />
<rect x="66" y="241" width="2" height="1" fill="#000" />
<rect x="69" y="241" width="2" height="1" fill="#000" />
<rect x="72" y="241" width="2" height="1" fill="#000" />
<rect x="66" y="243" width="2" height="1" fill="#000" />
<rect x="69" y="243" width="2" height="1" fill="#000" />
<rect x="72" y="243" width="2" height="1" fill="#000" />
<rect x="66" y="245" width="2" height="1" fill="#000" />
<rect x="69" y="245" width="2" height="1" fill="#000" />
<rect x="72" y="245" width="2" height="1" fill="#000" />
<text x="83.5" y="246" font-family="&quot;Liberation Sans&quot;, sans-serif" font-size="11" fill="#000" textLength="56.3" lengthAdjust="spacingAndGlyphs">departments</text>
<rect x="53" y="260" width="1" height="1" fill="#808080" />
<rect x="55" y="260" width="1" height="1" fill="#808080" />
<rect x="57" y="260" width="1" height="1" fill="#808080" />
<rect x="59" y="260" width="1" height="1" fill="#808080" />
<rect x="65" y="266" width="12" height="1" fill="#8c8c8c" />
<rect x="76" y="255" width="1" height="12" fill="#8c8c8c" />
<rect x="64" y="254" width="12" height="12" fill="#000" />
<rect x="64" y="254" width="12" height="2" fill="#000080" />
<rect x="65" y="256" width="10" height="9" fill="#fff" />
<rect x="66" y="257" width="2" height="1" fill="#000" />
<rect x="69" y="257" width="2" height="1" fill="#000" />
<rect x="72" y="257" width="2" height="1" fill="#000" />
<rect x="66" y="259" width="2" height="1" fill="#000" />
<rect x="69" y="259" width="2" height="1" fill="#000" />
<rect x="72" y="259" width="2" height="1" fill="#000" />
<rect x="66" y="261" width="2" height="1" fill="#000" />
<rect x="69" y="261" width="2" height="1" fill="#000" />
<rect x="72" y="261" width="2" height="1" fill="#000" />
<rect x="66" y="263" width="2" height="1" fill="#000" />
<rect x="69" y="263" width="2" height="1" fill="#000" />
<rect x="72" y="263" width="2" height="1" fill="#000" />
<text x="83.5" y="264" font-family="&quot;Liberation Sans&quot;, sans-serif" font-size="11" fill="#000" textLength="48.9" lengthAdjust="spacingAndGlyphs">employees</text>
<rect x="53" y="278" width="1" height="1" fill="#808080" />
<rect x="55" y="278" width="1" height="1" fill="#808080" />
<rect x="57" y="278" width="1" height="1" fill="#808080" />
<rect x="59" y="278" width="1" height="1" fill="#808080" />
<rect x="65" y="284" width="12" height="1" fill="#8c8c8c" />
<rect x="76" y="273" width="1" height="12" fill="#8c8c8c" />
<rect x="64" y="272" width="12" height="12" fill="#000" />
<rect x="64" y="272" width="12" height="2" fill="#000080" />
<rect x="65" y="274" width="10" height="9" fill="#fff" />
<rect x="66" y="275" width="2" height="1" fill="#000" />
<rect x="69" y="275" width="2" height="1" fill="#000" />
<rect x="72" y="275" width="2" height="1" fill="#000" />
<rect x="66" y="277" width="2" height="1" fill="#000" />
<rect x="69" y="277" width="2" height="1" fill="#000" />
<rect x="72" y="277" width="2" height="1" fill="#000" />
<rect x="66" y="279" width="2" height="1" fill="#000" />
<rect x="69" y="279" width="2" height="1" fill="#000" />
<rect x="72" y="279" width="2" height="1" fill="#000" />
<rect x="66" y="281" width="2" height="1" fill="#000" />
<rect x="69" y="281" width="2" height="1" fill="#000" />
<rect x="72" y="281" width="2" height="1" fill="#000" />
<text x="83.5" y="282" font-family="&quot;Liberation Sans&quot;, sans-serif" font-size="11" fill="#000" textLength="54.6" lengthAdjust="spacingAndGlyphs">employees2</text>
<rect x="53" y="296" width="1" height="1" fill="#808080" />
<rect x="55" y="296" width="1" height="1" fill="#808080" />
<rect x="57" y="296" width="1" height="1" fill="#808080" />
<rect x="59" y="296" width="1" height="1" fill="#808080" />
<rect x="65" y="302" width="12" height="1" fill="#8c8c8c" />
<rect x="76" y="291" width="1" height="12" fill="#8c8c8c" />
<rect x="64" y="290" width="12" height="12" fill="#000" />
<rect x="64" y="290" width="12" height="2" fill="#000080" />
<rect x="65" y="292" width="10" height="9" fill="#fff" />
<rect x="66" y="293" width="2" height="1" fill="#000" />
<rect x="69" y="293" width="2" height="1" fill="#000" />
<rect x="72" y="293" width="2" height="1" fill="#000" />
<rect x="66" y="295" width="2" height="1" fill="#000" />
<rect x="69" y="295" width="2" height="1" fill="#000" />
<rect x="72" y="295" width="2" height="1" fill="#000" />
<rect x="66" y="297" width="2" height="1" fill="#000" />
<rect x="69" y="297" width="2" height="1" fill="#000" />
<rect x="72" y="297" width="2" height="1" fill="#000" />
<rect x="66" y="299" width="2" height="1" fill="#000" />
<rect x="69" y="299" width="2" height="1" fill="#000" />
<rect x="72" y="299" width="2" height="1" fill="#000" />
<text x="83.5" y="300" font-family="&quot;Liberation Sans&quot;, sans-serif" font-size="11" fill="#000" textLength="54.6" lengthAdjust="spacingAndGlyphs">employees3</text>
<rect x="53" y="314" width="1" height="1" fill="#808080" />
<rect x="55" y="314" width="1" height="1" fill="#808080" />
<rect x="57" y="314" width="1" height="1" fill="#808080" />
<rect x="59" y="314" width="1" height="1" fill="#808080" />
<rect x="65" y="320" width="12" height="1" fill="#8c8c8c" />
<rect x="76" y="309" width="1" height="12" fill="#8c8c8c" />
<rect x="64" y="308" width="12" height="12" fill="#000" />
<rect x="64" y="308" width="12" height="2" fill="#000080" />
<rect x="65" y="310" width="10" height="9" fill="#fff" />
<rect x="66" y="311" width="2" height="1" fill="#000" />
<rect x="69" y="311" width="2" height="1" fill="#000" />
<rect x="72" y="311" width="2" height="1" fill="#000" />
<rect x="66" y="313" width="2" height="1" fill="#000" />
<rect x="69" y="313" width="2" height="1" fill="#000" />
<rect x="72" y="313" width="2" height="1" fill="#000" />
<rect x="66" y="315" width="2" height="1" fill="#000" />
<rect x="69" y="315" width="2" height="1" fill="#000" />
<rect x="72" y="315" width="2" height="1" fill="#000" />
<rect x="66" y="317" width="2" height="1" fill="#000" />
<rect x="69" y="317" width="2" height="1" fill="#000" />
<rect x="72" y="317" width="2" height="1" fill="#000" />
<text x="83.5" y="318" font-family="&quot;Liberation Sans&quot;, sans-serif" font-size="11" fill="#000" textLength="54.6" lengthAdjust="spacingAndGlyphs">employees4</text>
<rect x="53" y="332" width="1" height="1" fill="#808080" />
<rect x="55" y="332" width="1" height="1" fill="#808080" />
<rect x="57" y="332" width="1" height="1" fill="#808080" />
<rect x="59" y="332" width="1" height="1" fill="#808080" />
<rect x="65" y="338" width="12" height="1" fill="#8c8c8c" />
<rect x="76" y="327" width="1" height="12" fill="#8c8c8c" />
<rect x="64" y="326" width="12" height="12" fill="#000" />
<rect x="64" y="326" width="12" height="2" fill="#000080" />
<rect x="65" y="328" width="10" height="9" fill="#fff" />
<rect x="66" y="329" width="2" height="1" fill="#000" />
<rect x="69" y="329" width="2" height="1" fill="#000" />
<rect x="72" y="329" width="2" height="1" fill="#000" />
<rect x="66" y="331" width="2" height="1" fill="#000" />
<rect x="69" y="331" width="2" height="1" fill="#000" />
<rect x="72" y="331" width="2" height="1" fill="#000" />
<rect x="66" y="333" width="2" height="1" fill="#000" />
<rect x="69" y="333" width="2" height="1" fill="#000" />
<rect x="72" y="333" width="2" height="1" fill="#000" />
<rect x="66" y="335" width="2" height="1" fill="#000" />
<rect x="69" y="335" width="2" height="1" fill="#000" />
<rect x="72" y="335" width="2" height="1" fill="#000" />
<text x="83.5" y="336" font-family="&quot;Liberation Sans&quot;, sans-serif" font-size="11" fill="#000" textLength="54.6" lengthAdjust="spacingAndGlyphs">employees5</text>
<rect x="53" y="350" width="1" height="1" fill="#808080" />
<rect x="55" y="350" width="1" height="1" fill="#808080" />
<rect x="57" y="350" width="1" height="1" fill="#808080" />
<rect x="59" y="350" width="1" height="1" fill="#808080" />
<rect x="65" y="356" width="12" height="1" fill="#8c8c8c" />
<rect x="76" y="345" width="1" height="12" fill="#8c8c8c" />
<rect x="64" y="344" width="12" height="12" fill="#000" />
<rect x="64" y="344" width="12" height="2" fill="#000080" />
<rect x="65" y="346" width="10" height="9" fill="#fff" />
<rect x="66" y="347" width="2" height="1" fill="#000" />
<rect x="69" y="347" width="2" height="1" fill="#000" />
<rect x="72" y="347" width="2" height="1" fill="#000" />
<rect x="66" y="349" width="2" height="1" fill="#000" />
<rect x="69" y="349" width="2" height="1" fill="#000" />
<rect x="72" y="349" width="2" height="1" fill="#000" />
<rect x="66" y="351" width="2" height="1" fill="#000" />
<rect x="69" y="351" width="2" height="1" fill="#000" />
<rect x="72" y="351" width="2" height="1" fill="#000" />
<rect x="66" y="353" width="2" height="1" fill="#000" />
<rect x="69" y="353" width="2" height="1" fill="#000" />
<rect x="72" y="353" width="2" height="1" fill="#000" />
<text x="83.5" y="354" font-family="&quot;Liberation Sans&quot;, sans-serif" font-size="11" fill="#000" textLength="54.6" lengthAdjust="spacingAndGlyphs">employees6</text>
<rect x="53" y="368" width="1" height="1" fill="#808080" />
<rect x="55" y="368" width="1" height="1" fill="#808080" />
<rect x="57" y="368" width="1" height="1" fill="#808080" />
<rect x="59" y="368" width="1" height="1" fill="#808080" />
<rect x="65" y="374" width="12" height="1" fill="#8c8c8c" />
<rect x="76" y="363" width="1" height="12" fill="#8c8c8c" />
<rect x="64" y="362" width="12" height="12" fill="#000" />
<rect x="64" y="362" width="12" height="2" fill="#000080" />
<rect x="65" y="364" width="10" height="9" fill="#fff" />
<rect x="66" y="365" width="2" height="1" fill="#000" />
<rect x="69" y="365" width="2" height="1" fill="#000" />
<rect x="72" y="365" width="2" height="1" fill="#000" />
<rect x="66" y="367" width="2" height="1" fill="#000" />
<rect x="69" y="367" width="2" height="1" fill="#000" />
<rect x="72" y="367" width="2" height="1" fill="#000" />
<rect x="66" y="369" width="2" height="1" fill="#000" />
<rect x="69" y="369" width="2" height="1" fill="#000" />
<rect x="72" y="369" width="2" height="1" fill="#000" />
<rect x="66" y="371" width="2" height="1" fill="#000" />
<rect x="69" y="371" width="2" height="1" fill="#000" />
<rect x="72" y="371" width="2" height="1" fill="#000" />
<text x="83.5" y="372" font-family="&quot;Liberation Sans&quot;, sans-serif" font-size="11" fill="#000" textLength="54.6" lengthAdjust="spacingAndGlyphs">employees7</text>
<rect x="53" y="386" width="1" height="1" fill="#808080" />
<rect x="55" y="386" width="1" height="1" fill="#808080" />
<rect x="57" y="386" width="1" height="1" fill="#808080" />
<rect x="59" y="386" width="1" height="1" fill="#808080" />
<rect x="65" y="392" width="12" height="1" fill="#8c8c8c" />
<rect x="76" y="381" width="1" height="12" fill="#8c8c8c" />
<rect x="64" y="380" width="12" height="12" fill="#000" />
<rect x="64" y="380" width="12" height="2" fill="#000080" />
<rect x="65" y="382" width="10" height="9" fill="#fff" />
<rect x="66" y="383" width="2" height="1" fill="#000" />
<rect x="69" y="383" width="2" height="1" fill="#000" />
<rect x="72" y="383" width="2" height="1" fill="#000" />
<rect x="66" y="385" width="2" height="1" fill="#000" />
<rect x="69" y="385" width="2" height="1" fill="#000" />
<rect x="72" y="385" width="2" height="1" fill="#000" />
<rect x="66" y="387" width="2" height="1" fill="#000" />
<rect x="69" y="387" width="2" height="1" fill="#000" />
<rect x="72" y="387" width="2" height="1" fill="#000" />
<rect x="66" y="389" width="2" height="1" fill="#000" />
<rect x="69" y="389" width="2" height="1" fill="#000" />
<rect x="72" y="389" width="2" height="1" fill="#000" />
<text x="83.5" y="390" font-family="&quot;Liberation Sans&quot;, sans-serif" font-size="11" fill="#000" textLength="46.1" lengthAdjust="spacingAndGlyphs">messages</text>
<rect x="53" y="404" width="1" height="1" fill="#808080" />
<rect x="55" y="404" width="1" height="1" fill="#808080" />
<rect x="57" y="404" width="1" height="1" fill="#808080" />
<rect x="59" y="404" width="1" height="1" fill="#808080" />
<rect x="65" y="410" width="12" height="1" fill="#8c8c8c" />
<rect x="76" y="399" width="1" height="12" fill="#8c8c8c" />
<rect x="64" y="398" width="12" height="12" fill="#000" />
<rect x="64" y="398" width="12" height="2" fill="#000080" />
<rect x="65" y="400" width="10" height="9" fill="#fff" />
<rect x="66" y="401" width="2" height="1" fill="#000" />
<rect x="69" y="401" width="2" height="1" fill="#000" />
<rect x="72" y="401" width="2" height="1" fill="#000" />
<rect x="66" y="403" width="2" height="1" fill="#000" />
<rect x="69" y="403" width="2" height="1" fill="#000" />
<rect x="72" y="403" width="2" height="1" fill="#000" />
<rect x="66" y="405" width="2" height="1" fill="#000" />
<rect x="69" y="405" width="2" height="1" fill="#000" />
<rect x="72" y="405" width="2" height="1" fill="#000" />
<rect x="66" y="407" width="2" height="1" fill="#000" />
<rect x="69" y="407" width="2" height="1" fill="#000" />
<rect x="72" y="407" width="2" height="1" fill="#000" />
<text x="83.50" y="408" font-family="&quot;Liberation Sans&quot;, sans-serif" font-size="11" font-weight="400" fill="#000" textLength="20.00" lengthAdjust="spacingAndGlyphs" >pets</text>
<rect x="53" y="422" width="1" height="1" fill="#808080" />
<rect x="55" y="422" width="1" height="1" fill="#808080" />
<rect x="57" y="422" width="1" height="1" fill="#808080" />
<rect x="59" y="422" width="1" height="1" fill="#808080" />
<rect x="65" y="428" width="12" height="1" fill="#8c8c8c" />
<rect x="76" y="417" width="1" height="12" fill="#8c8c8c" />
<rect x="64" y="416" width="12" height="12" fill="#000" />
<rect x="64" y="416" width="12" height="2" fill="#000080" />
<rect x="65" y="418" width="10" height="9" fill="#fff" />
<rect x="66" y="419" width="2" height="1" fill="#000" />
<rect x="69" y="419" width="2" height="1" fill="#000" />
<rect x="72" y="419" width="2" height="1" fill="#000" />
<rect x="66" y="421" width="2" height="1" fill="#000" />
<rect x="69" y="421" width="2" height="1" fill="#000" />
<rect x="72" y="421" width="2" height="1" fill="#000" />
<rect x="66" y="423" width="2" height="1" fill="#000" />
<rect x="69" y="423" width="2" height="1" fill="#000" />
<rect x="72" y="423" width="2" height="1" fill="#000" />
<rect x="66" y="425" width="2" height="1" fill="#000" />
<rect x="69" y="425" width="2" height="1" fill="#000" />
<rect x="72" y="425" width="2" height="1" fill="#000" />
<text x="83.5" y="426" font-family="&quot;Liberation Sans&quot;, sans-serif" font-size="11" fill="#000" textLength="50.6" lengthAdjust="spacingAndGlyphs">restaurants</text>
<rect x="53" y="440" width="1" height="1" fill="#808080" />
<rect x="55" y="440" width="1" height="1" fill="#808080" />
<rect x="57" y="440" width="1" height="1" fill="#808080" />
<rect x="59" y="440" width="1" height="1" fill="#808080" />
<rect x="65" y="446" width="12" height="1" fill="#8c8c8c" />
<rect x="76" y="435" width="1" height="12" fill="#8c8c8c" />
<rect x="64" y="434" width="12" height="12" fill="#000" />
<rect x="64" y="434" width="12" height="2" fill="#000080" />
<rect x="65" y="436" width="10" height="9" fill="#fff" />
<rect x="66" y="437" width="2" height="1" fill="#000" />
<rect x="69" y="437" width="2" height="1" fill="#000" />
<rect x="72" y="437" width="2" height="1" fill="#000" />
<rect x="66" y="439" width="2" height="1" fill="#000" />
<rect x="69" y="439" width="2" height="1" fill="#000" />
<rect x="72" y="439" width="2" height="1" fill="#000" />
<rect x="66" y="441" width="2" height="1" fill="#000" />
<rect x="69" y="441" width="2" height="1" fill="#000" />
<rect x="72" y="441" width="2" height="1" fill="#000" />
<rect x="66" y="443" width="2" height="1" fill="#000" />
<rect x="69" y="443" width="2" height="1" fill="#000" />
<rect x="72" y="443" width="2" height="1" fill="#000" />
<text x="83.50" y="444" font-family="&quot;Liberation Sans&quot;, sans-serif" font-size="11" font-weight="400" fill="#000" textLength="16.70" lengthAdjust="spacingAndGlyphs" >spo</text>
<rect x="53" y="458" width="1" height="1" fill="#808080" />
<rect x="55" y="458" width="1" height="1" fill="#808080" />
<rect x="57" y="458" width="1" height="1" fill="#808080" />
<rect x="59" y="458" width="1" height="1" fill="#808080" />
<rect x="65" y="464" width="12" height="1" fill="#8c8c8c" />
<rect x="76" y="453" width="1" height="12" fill="#8c8c8c" />
<rect x="64" y="452" width="12" height="12" fill="#000" />
<rect x="64" y="452" width="12" height="2" fill="#000080" />
<rect x="65" y="454" width="10" height="9" fill="#fff" />
<rect x="66" y="455" width="2" height="1" fill="#000" />
<rect x="69" y="455" width="2" height="1" fill="#000" />
<rect x="72" y="455" width="2" height="1" fill="#000" />
<rect x="66" y="457" width="2" height="1" fill="#000" />
<rect x="69" y="457" width="2" height="1" fill="#000" />
<rect x="72" y="457" width="2" height="1" fill="#000" />
<rect x="66" y="459" width="2" height="1" fill="#000" />
<rect x="69" y="459" width="2" height="1" fill="#000" />
<rect x="72" y="459" width="2" height="1" fill="#000" />
<rect x="66" y="461" width="2" height="1" fill="#000" />
<rect x="69" y="461" width="2" height="1" fill="#000" />
<rect x="72" y="461" width="2" height="1" fill="#000" />
<text x="83.50" y="462" font-family="&quot;Liberation Sans&quot;, sans-serif" font-size="11" font-weight="400" fill="#000" textLength="29.00" lengthAdjust="spacingAndGlyphs" >t_blob</text>
<rect x="53" y="476" width="1" height="1" fill="#808080" />
<rect x="55" y="476" width="1" height="1" fill="#808080" />
<rect x="57" y="476" width="1" height="1" fill="#808080" />
<rect x="59" y="476" width="1" height="1" fill="#808080" />
<rect x="65" y="482" width="12" height="1" fill="#8c8c8c" />
<rect x="76" y="471" width="1" height="12" fill="#8c8c8c" />
<rect x="64" y="470" width="12" height="12" fill="#000" />
<rect x="64" y="470" width="12" height="2" fill="#000080" />
<rect x="65" y="472" width="10" height="9" fill="#fff" />
<rect x="66" y="473" width="2" height="1" fill="#000" />
<rect x="69" y="473" width="2" height="1" fill="#000" />
<rect x="72" y="473" width="2" height="1" fill="#000" />
<rect x="66" y="475" width="2" height="1" fill="#000" />
<rect x="69" y="475" width="2" height="1" fill="#000" />
<rect x="72" y="475" width="2" height="1" fill="#000" />
<rect x="66" y="477" width="2" height="1" fill="#000" />
<rect x="69" y="477" width="2" height="1" fill="#000" />
<rect x="72" y="477" width="2" height="1" fill="#000" />
<rect x="66" y="479" width="2" height="1" fill="#000" />
<rect x="69" y="479" width="2" height="1" fill="#000" />
<rect x="72" y="479" width="2" height="1" fill="#000" />
<text x="83.50" y="480" font-family="&quot;Liberation Sans&quot;, sans-serif" font-size="11" font-weight="400" fill="#000" textLength="29.00" lengthAdjust="spacingAndGlyphs" >t_clob</text>
<rect x="53" y="494" width="1" height="1" fill="#808080" />
<rect x="55" y="494" width="1" height="1" fill="#808080" />
<rect x="57" y="494" width="1" height="1" fill="#808080" />
<rect x="59" y="494" width="1" height="1" fill="#808080" />
<rect x="65" y="500" width="12" height="1" fill="#8c8c8c" />
<rect x="76" y="489" width="1" height="12" fill="#8c8c8c" />
<rect x="64" y="488" width="12" height="12" fill="#000" />
<rect x="64" y="488" width="12" height="2" fill="#000080" />
<rect x="65" y="490" width="10" height="9" fill="#fff" />
<rect x="66" y="491" width="2" height="1" fill="#000" />
<rect x="69" y="491" width="2" height="1" fill="#000" />
<rect x="72" y="491" width="2" height="1" fill="#000" />
<rect x="66" y="493" width="2" height="1" fill="#000" />
<rect x="69" y="493" width="2" height="1" fill="#000" />
<rect x="72" y="493" width="2" height="1" fill="#000" />
<rect x="66" y="495" width="2" height="1" fill="#000" />
<rect x="69" y="495" width="2" height="1" fill="#000" />
<rect x="72" y="495" width="2" height="1" fill="#000" />
<rect x="66" y="497" width="2" height="1" fill="#000" />
<rect x="69" y="497" width="2" height="1" fill="#000" />
<rect x="72" y="497" width="2" height="1" fill="#000" />
<text x="83.50" y="498" font-family="&quot;Liberation Sans&quot;, sans-serif" font-size="11" font-weight="400" fill="#000" textLength="30.80" lengthAdjust="spacingAndGlyphs" >tickets</text>
<rect x="34" y="512" width="1" height="1" fill="#808080" />
<rect x="36" y="512" width="1" height="1" fill="#808080" />
<rect x="38" y="512" width="1" height="1" fill="#808080" />
<rect x="40" y="512" width="1" height="1" fill="#808080" />
<g transform="translate(43,504)"><rect x="2" y="0" width="13" height="13" fill="#000"/><rect x="3" y="1" width="13" height="13" fill="#8c8c8c" opacity="0.0"/><rect x="2" y="0" width="13" height="3" fill="#000080"/><rect x="3" y="3" width="11" height="9" fill="#fff"/><rect x="4" y="4" width="2" height="1" fill="#000"/><rect x="7" y="4" width="2" height="1" fill="#000"/><rect x="10" y="4" width="2" height="1" fill="#000"/><path d="M4 6 L7 9 M7 6 L4 9 M8 6 v3 M10 9 L13 6" stroke="#000" stroke-width="1"/><rect x="15" y="1" width="1" height="13" fill="#8c8c8c"/><rect x="0" y="12" width="4" height="4" fill="#000"/><rect x="6" y="12" width="4" height="4" fill="#000"/><rect x="1" y="13" width="2" height="2" fill="#2ee8f0"/><rect x="7" y="13" width="2" height="2" fill="#2ee8f0"/></g>
<text x="63.50" y="516" font-family="&quot;Liberation Sans&quot;, sans-serif" font-size="11" font-weight="400" fill="#000" textLength="29.10" lengthAdjust="spacingAndGlyphs" >Views</text>
<rect x="239" y="82" width="712" height="618" fill="#d8d8d8" />
<rect x="240" y="83" width="710" height="616" fill="#ffffff" />
<rect x="233" y="699" width="721" height="1" fill="#f1eff2" />
<rect x="233" y="700" width="721" height="2" fill="#a3a3a3" />
<defs><filter id="sh" x="-20%" y="-20%" width="140%" height="140%"><feGaussianBlur stdDeviation="8"/></filter></defs>
<rect x="117" y="66" width="724" height="576" fill="#000" opacity="0.36" filter="url(#sh)"/>
<rect x="116" y="65" width="722" height="572" fill="#716f75" />
<rect x="117" y="66" width="720" height="30" fill="#ffffff" />
<g transform="translate(125,72)" shape-rendering="geometricPrecision"><rect x="0" y="0" width="16" height="16" rx="3.5" fill="#f28a24"/><rect x="2.5" y="1" width="11" height="3.2" fill="#fde3c4"/><path d="M5.3 1v3.2M8 1v3.2M10.7 1v3.2" stroke="#f6b574" stroke-width="0.6"/><rect x="5.5" y="5.8" width="5" height="1.2" fill="#f8bf86"/><path d="M2.2 9 h3 l1.5 1.5 v4 h-4.5 z" fill="#fad3a8"/><path d="M3 11 l2 2" stroke="#f2a060" stroke-width="0.8"/><rect x="8" y="11.8" width="4.5" height="1.4" fill="#f7b477"/></g>
<rect x="718" y="80" width="11" height="1" fill="#000" />
<rect x="763.5" y="75.5" width="9" height="9" fill="none" stroke="#000" stroke-width="1"/>
<path d="M809 75 L819 85 M819 75 L809 85" stroke="#000" stroke-width="1"/>
<rect x="117" y="96" width="160" height="541" fill="#003e87" />
<rect x="277" y="96" width="560" height="540" fill="#f1eff2" />
<rect x="277" y="96" width="1" height="540" fill="#ffffff" />
<rect x="280" y="352" width="1" height="1" fill="#a8a8a8" />
<rect x="279" y="353" width="1" height="1" fill="#b4b4b4" />
<rect x="281" y="353" width="1" height="1" fill="#ffffff" />
<rect x="280" y="355" width="1" height="1" fill="#a8a8a8" />
<rect x="279" y="356" width="1" height="1" fill="#b4b4b4" />
<rect x="281" y="356" width="1" height="1" fill="#ffffff" />
<rect x="280" y="358" width="1" height="1" fill="#a8a8a8" />
<rect x="279" y="359" width="1" height="1" fill="#b4b4b4" />
<rect x="281" y="359" width="1" height="1" fill="#ffffff" />
<rect x="280" y="361" width="1" height="1" fill="#a8a8a8" />
<rect x="279" y="362" width="1" height="1" fill="#b4b4b4" />
<rect x="281" y="362" width="1" height="1" fill="#ffffff" />
<rect x="280" y="364" width="1" height="1" fill="#a8a8a8" />
<rect x="279" y="365" width="1" height="1" fill="#b4b4b4" />
<rect x="281" y="365" width="1" height="1" fill="#ffffff" />
<rect x="280" y="367" width="1" height="1" fill="#a8a8a8" />
<rect x="279" y="368" width="1" height="1" fill="#b4b4b4" />
<rect x="281" y="368" width="1" height="1" fill="#ffffff" />
<rect x="280" y="370" width="1" height="1" fill="#a8a8a8" />
<rect x="279" y="371" width="1" height="1" fill="#b4b4b4" />
<rect x="281" y="371" width="1" height="1" fill="#ffffff" />
<rect x="280" y="373" width="1" height="1" fill="#a8a8a8" />
<rect x="279" y="374" width="1" height="1" fill="#b4b4b4" />
<rect x="281" y="374" width="1" height="1" fill="#ffffff" />
<rect x="280" y="376" width="1" height="1" fill="#a8a8a8" />
<rect x="279" y="377" width="1" height="1" fill="#b4b4b4" />
<rect x="281" y="377" width="1" height="1" fill="#ffffff" />
<rect x="280" y="379" width="1" height="1" fill="#a8a8a8" />
<rect x="279" y="380" width="1" height="1" fill="#b4b4b4" />
<rect x="281" y="380" width="1" height="1" fill="#ffffff" />
<rect x="283" y="97" width="552" height="1" fill="#a3a1a6" />
<rect x="283" y="97" width="1" height="493" fill="#a3a1a6" />
<rect x="284" y="98" width="550" height="1" fill="#ffffff" />
<rect x="284" y="98" width="1" height="491" fill="#ffffff" />
<rect x="283" y="589" width="552" height="1" fill="#a3a1a6" />
<rect x="284" y="588" width="551" height="1" fill="#ffffff" />
<rect x="834" y="97" width="1" height="537" fill="#ffffff" />
<rect x="283" y="590" width="552" height="1" fill="#ffffff" />
<rect x="283" y="590" width="1" height="44" fill="#ffffff" />
<rect x="835" y="97" width="2" height="539" fill="#a3a1a6" />
<rect x="283" y="634" width="554" height="2" fill="#a3a1a6" />
<rect x="125" y="108" width="16" height="17" fill="#8a8a8a" />
<rect x="141" y="117" width="13" height="1" fill="#ffffff" />
<rect x="153" y="117" width="1" height="132" fill="#ffffff" />
<rect x="133" y="125" width="1" height="115" fill="#ffffff" />
<rect x="145" y="141" width="16" height="17" fill="#8a8a8a" />
<rect x="145" y="174" width="16" height="17" fill="#8a8a8a" />
<rect x="145" y="207" width="16" height="17" fill="#8a8a8a" />
<rect x="141" y="248" width="13" height="1" fill="#ffffff" />
<rect x="125" y="240" width="16" height="17" fill="#00a800" />
<rect x="126" y="241" width="14" height="15" fill="#00cc00" />
<text x="157.40" y="121" font-family="&quot;Liberation Sans&quot;, sans-serif" font-size="12" font-weight="400" fill="#fff" textLength="86.90" lengthAdjust="spacingAndGlyphs" >Open Source Set</text>
<text x="165.00" y="154" font-family="&quot;Liberation Sans&quot;, sans-serif" font-size="12" font-weight="400" fill="#fff" textLength="71.50" lengthAdjust="spacingAndGlyphs" >Set Target Set</text>
<text x="164.90" y="187" font-family="&quot;Liberation Sans&quot;, sans-serif" font-size="12" font-weight="400" fill="#fff" textLength="56.80" lengthAdjust="spacingAndGlyphs" >Map Items</text>
<text x="164.90" y="220" font-family="&quot;Liberation Sans&quot;, sans-serif" font-size="12" font-weight="400" fill="#fff" textLength="51.60" lengthAdjust="spacingAndGlyphs" >Summary</text>
<text x="156.90" y="253" font-family="&quot;Liberation Sans&quot;, sans-serif" font-size="12" font-weight="700" fill="#fff" textLength="74.60" lengthAdjust="spacingAndGlyphs" >Convert Data</text>
<rect x="285" y="155" width="548" height="20" fill="#cdcad0" />
<rect x="286" y="156" width="546" height="18" fill="#039424" />
<rect x="287" y="243" width="548" height="20" fill="#cdcad0" />
<rect x="288" y="244" width="546" height="18" fill="#039424" />
<text x="293.00" y="191" font-family="&quot;Liberation Sans&quot;, sans-serif" font-size="12" font-weight="400" fill="#000" textLength="31.40" lengthAdjust="spacingAndGlyphs" >100 %</text>
<text x="390.00" y="191" font-family="&quot;Liberation Sans&quot;, sans-serif" font-size="12" font-weight="400" fill="#000" textLength="55.90" lengthAdjust="spacingAndGlyphs" >27 records,</text>
<text x="459.20" y="191" font-family="&quot;Liberation Sans&quot;, sans-serif" font-size="12" font-weight="400" fill="#000" textLength="111.00" lengthAdjust="spacingAndGlyphs" >Elapsed: 00:00:00.125.</text>
<text x="583.10" y="191" font-family="&quot;Liberation Sans&quot;, sans-serif" font-size="12" font-weight="400" fill="#000" textLength="133.10" lengthAdjust="spacingAndGlyphs" >From Table: departments,</text>
<text x="729.10" y="191" font-family="&quot;Liberation Sans&quot;, sans-serif" font-size="12" font-weight="400" fill="#000" textLength="35.50" lengthAdjust="spacingAndGlyphs" >To File:</text>
<text x="390.00" y="206" font-family="&quot;Liberation Sans&quot;, sans-serif" font-size="12" font-weight="400" fill="#000" textLength="304.90" lengthAdjust="spacingAndGlyphs" >C:\Users\pan\Documents\export_tables\departments.csv.</text>
<text x="293.20" y="279" font-family="&quot;Liberation Sans&quot;, sans-serif" font-size="12" font-weight="400" fill="#000" textLength="31.20" lengthAdjust="spacingAndGlyphs" >100 %</text>
<text x="389.90" y="279" font-family="&quot;Liberation Sans&quot;, sans-serif" font-size="12" font-weight="400" fill="#000" textLength="91.40" lengthAdjust="spacingAndGlyphs" >3 tables / 3 tables</text>
<text x="493.00" y="279" font-family="&quot;Liberation Sans&quot;, sans-serif" font-size="12" font-weight="400" fill="#000" textLength="88.10" lengthAdjust="spacingAndGlyphs" >Elapsed: 00:00:00</text>
<text x="593.00" y="279" font-family="&quot;Liberation Sans&quot;, sans-serif" font-size="12" font-weight="400" fill="#000" textLength="105.20" lengthAdjust="spacingAndGlyphs" >Remaining: 00:00:00</text>
<text x="710.50" y="279" font-family="&quot;Liberation Sans&quot;, sans-serif" font-size="12" font-weight="400" fill="#000" textLength="93.30" lengthAdjust="spacingAndGlyphs" >Total Records: 152</text>
<text x="285.20" y="408" font-family="&quot;Liberation Sans&quot;, sans-serif" font-size="12" font-weight="400" fill="#000" textLength="37.80" lengthAdjust="spacingAndGlyphs" >Output</text>
<rect x="285" y="411" width="549" height="177" fill="#7a7a7a" />
<rect x="286" y="412" width="547" height="175" fill="#ffffff" />
<rect x="816" y="412" width="16" height="174" fill="#f1eff2" />
<rect x="816" y="467" width="16" height="102" fill="#cdcdcd" />
<path d="M820.3 424.6 L823.5 421.2 L826.7 424.6" fill="none" stroke="#5a5a5a" stroke-width="2.4" shape-rendering="geometricPrecision"/>
<path d="M820.3 575.6 L823.5 579 L826.7 575.6" fill="none" stroke="#5a5a5a" stroke-width="2.4" shape-rendering="geometricPrecision"/>
<text x="290.90" y="426" font-family="&quot;Liberation Sans&quot;, sans-serif" font-size="12" font-weight="400" fill="#000" textLength="61.80" lengthAdjust="spacingAndGlyphs" >100 records,</text>
<text x="365.90" y="426" font-family="&quot;Liberation Sans&quot;, sans-serif" font-size="12" font-weight="400" fill="#000" textLength="111.50" lengthAdjust="spacingAndGlyphs" >Elapsed: 00:00:00.063.</text>
<text x="489.80" y="426" font-family="&quot;Liberation Sans&quot;, sans-serif" font-size="12" font-weight="400" fill="#000" textLength="121.60" lengthAdjust="spacingAndGlyphs" >From Table: customers,</text>
<text x="624.00" y="426" font-family="&quot;Liberation Sans&quot;, sans-serif" font-size="12" font-weight="400" fill="#000" textLength="35.50" lengthAdjust="spacingAndGlyphs" >To File:</text>
<text x="663.30" y="426" font-family="&quot;Liberation Sans&quot;, sans-serif" font-size="12" font-weight="400" fill="#000" textLength="134.90" lengthAdjust="spacingAndGlyphs" >C:\Users\pan\Documents</text>
<text x="290.90" y="441" font-family="&quot;Liberation Sans&quot;, sans-serif" font-size="12" font-weight="400" fill="#000" textLength="158.20" lengthAdjust="spacingAndGlyphs" >\export_tables\customers.csv.</text>
<text x="290.90" y="456" font-family="&quot;Liberation Sans&quot;, sans-serif" font-size="12" font-weight="400" fill="#000" textLength="55.50" lengthAdjust="spacingAndGlyphs" >27 records,</text>
<text x="360.10" y="456" font-family="&quot;Liberation Sans&quot;, sans-serif" font-size="12" font-weight="400" fill="#000" textLength="111.40" lengthAdjust="spacingAndGlyphs" >Elapsed: 00:00:00.125.</text>
<text x="483.80" y="456" font-family="&quot;Liberation Sans&quot;, sans-serif" font-size="12" font-weight="400" fill="#000" textLength="133.90" lengthAdjust="spacingAndGlyphs" >From Table: departments,</text>
<text x="629.90" y="456" font-family="&quot;Liberation Sans&quot;, sans-serif" font-size="12" font-weight="400" fill="#000" textLength="35.50" lengthAdjust="spacingAndGlyphs" >To File:</text>
<text x="668.90" y="456" font-family="&quot;Liberation Sans&quot;, sans-serif" font-size="12" font-weight="400" fill="#000" textLength="135.40" lengthAdjust="spacingAndGlyphs" >C:\Users\pan\Documents</text>
<text x="290.90" y="471" font-family="&quot;Liberation Sans&quot;, sans-serif" font-size="12" font-weight="400" fill="#000" textLength="169.70" lengthAdjust="spacingAndGlyphs" >\export_tables\departments.csv.</text>
<text x="290.90" y="486" font-family="&quot;Liberation Sans&quot;, sans-serif" font-size="12" font-weight="400" fill="#000" textLength="139.40" lengthAdjust="spacingAndGlyphs" >Total Convert Records: 152</text>
<text x="290.90" y="501" font-family="&quot;Liberation Sans&quot;, sans-serif" font-size="12" font-weight="400" fill="#000" textLength="65.60" lengthAdjust="spacingAndGlyphs" >End Convert</text>
<text x="290.90" y="516" font-family="&quot;Liberation Sans&quot;, sans-serif" font-size="12" font-weight="400" fill="#000" textLength="68.40" lengthAdjust="spacingAndGlyphs" >Total 3 tables</text>
<text x="290.90" y="531" font-family="&quot;Liberation Sans&quot;, sans-serif" font-size="12" font-weight="400" fill="#000" textLength="98.30" lengthAdjust="spacingAndGlyphs" >Converted 3 tables</text>
<text x="290.90" y="546" font-family="&quot;Liberation Sans&quot;, sans-serif" font-size="12" font-weight="400" fill="#000" textLength="100.30" lengthAdjust="spacingAndGlyphs" >Succeeded 3 tables</text>
<text x="290.90" y="561" font-family="&quot;Liberation Sans&quot;, sans-serif" font-size="12" font-weight="400" fill="#000" textLength="115.90" lengthAdjust="spacingAndGlyphs" >Failed (partly) 0 tables</text>
<rect x="292" y="597" width="73" height="23" fill="#0078d7" />
<rect x="294" y="599" width="69" height="19" fill="#e1e1e1" />
<text x="316.20" y="613" font-family="&quot;Liberation Sans&quot;, sans-serif" font-size="12" font-weight="400" fill="#000" textLength="25.40" lengthAdjust="spacingAndGlyphs" >Back</text>
<rect x="372" y="597" width="73" height="23" fill="#bfbfbf" />
<rect x="373" y="598" width="71" height="21" fill="#cccccc" />
<text x="395.50" y="613" font-family="&quot;Liberation Sans&quot;, sans-serif" font-size="12" font-weight="400" fill="#838383" textLength="25.00" lengthAdjust="spacingAndGlyphs" >Stop</text>
<rect x="452" y="597" width="73" height="23" fill="#adadad" />
<rect x="453" y="598" width="71" height="21" fill="#e1e1e1" />
<text x="473.70" y="613" font-family="&quot;Liberation Sans&quot;, sans-serif" font-size="12" font-weight="400" fill="#000" textLength="29.90" lengthAdjust="spacingAndGlyphs" >Close</text>
<rect x="531" y="597" width="89" height="23" fill="#adadad" />
<rect x="532" y="598" width="87" height="21" fill="#e1e1e1" />
<text x="541.70" y="613" font-family="&quot;Liberation Sans&quot;, sans-serif" font-size="12" font-weight="400" fill="#000" textLength="66.40" lengthAdjust="spacingAndGlyphs" >Save Session</text>
<rect x="628" y="597" width="64" height="23" fill="#adadad" />
<rect x="629" y="598" width="62" height="21" fill="#e1e1e1" />
<text x="647.00" y="613" font-family="&quot;Liberation Sans&quot;, sans-serif" font-size="12" font-weight="400" fill="#000" textLength="25.40" lengthAdjust="spacingAndGlyphs" >View</text>
<rect x="696" y="597" width="64" height="23" fill="#adadad" />
<rect x="697" y="598" width="62" height="21" fill="#e1e1e1" />
<text x="702.80" y="613" font-family="&quot;Liberation Sans&quot;, sans-serif" font-size="12" font-weight="700" fill="#000" textLength="50.60" lengthAdjust="spacingAndGlyphs" >Buy Now</text>
</svg></body></html>
